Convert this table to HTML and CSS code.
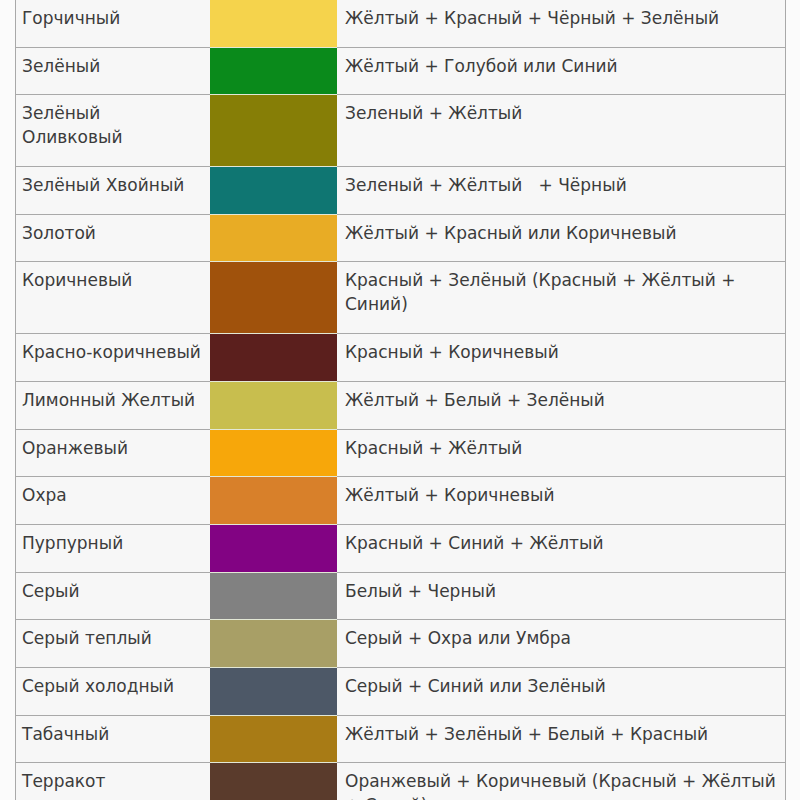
FILE: index.html
```html
<!DOCTYPE html>
<html lang="ru">
<head>
<meta charset="utf-8">
<title>Смешивание цветов</title>
<link rel="stylesheet" href="styles.css">
</head>
<body>
<div class="table">
  <div class="name">Горчичный</div><div class="sw c1"></div><div class="desc">Жёлтый + Красный + Чёрный + Зелёный</div>
  <div class="name">Зелёный</div><div class="sw c2"></div><div class="desc">Жёлтый + Голубой или Синий</div>
  <div class="name">Зелёный<br>Оливковый</div><div class="sw c3"></div><div class="desc">Зеленый + Жёлтый</div>
  <div class="name">Зелёный Хвойный</div><div class="sw c4"></div><div class="desc">Зеленый + Жёлтый&nbsp;&nbsp; + Чёрный</div>
  <div class="name">Золотой</div><div class="sw c5"></div><div class="desc">Жёлтый + Красный или Коричневый</div>
  <div class="name">Коричневый</div><div class="sw c6"></div><div class="desc">Красный + Зелёный (Красный + Жёлтый +<br>Синий)</div>
  <div class="name">Красно-коричневый</div><div class="sw c7"></div><div class="desc">Красный + Коричневый</div>
  <div class="name">Лимонный Желтый</div><div class="sw c8"></div><div class="desc">Жёлтый + Белый + Зелёный</div>
  <div class="name">Оранжевый</div><div class="sw c9"></div><div class="desc">Красный + Жёлтый</div>
  <div class="name">Охра</div><div class="sw c10"></div><div class="desc">Жёлтый + Коричневый</div>
  <div class="name">Пурпурный</div><div class="sw c11"></div><div class="desc">Красный + Синий + Жёлтый</div>
  <div class="name">Серый</div><div class="sw c12"></div><div class="desc">Белый + Черный</div>
  <div class="name">Серый теплый</div><div class="sw c13"></div><div class="desc">Серый + Охра или Умбра</div>
  <div class="name">Серый холодный</div><div class="sw c14"></div><div class="desc">Серый + Синий или Зелёный</div>
  <div class="name">Табачный</div><div class="sw c15"></div><div class="desc">Жёлтый + Зелёный + Белый + Красный</div>
  <div class="name">Терракот</div><div class="sw c16"></div><div class="desc">Оранжевый + Коричневый (Красный + Жёлтый<br>+ Синий)</div>
</div>
</body>
</html>
```

FILE: styles.css
```css
html, body {
  margin: 0;
  padding: 0;
  background: #fbfbfb;
}

.table {
  margin-left: 15px;
  width: 769px;
  display: grid;
  grid-template-columns: 194px 127px 448px;
  border-left: 1px solid #a9a9a9;
  border-right: 1px solid #a9a9a9;
  font-family: "DejaVu Sans", sans-serif;
  font-size: 17px;
  line-height: 24px;
  color: #3c3c3c;
}

.name, .desc {
  background: #f7f7f7;
  border-bottom: 1px solid #a9a9a9;
  padding: 6px 6px 16.7px 6px;
  white-space: nowrap;
}

.desc {
  padding-left: 8px;
}

.sw {
  border-bottom: 1px solid #e3e8d6;
}

.c1 { background: #f5d34c; }
.c2 { background: #0a8a1b; }
.c3 { background: #867e06; }
.c4 { background: #0f7672; }
.c5 { background: #e8ac25; }
.c6 { background: #a0520c; }
.c7 { background: #5b1f1d; }
.c8 { background: #c8be4e; }
.c9 { background: #f7a70a; }
.c10 { background: #d8802a; }
.c11 { background: #820383; }
.c12 { background: #818181; }
.c13 { background: #a89f66; }
.c14 { background: #4d5867; }
.c15 { background: #a87b15; }
.c16 { background: #5a3b2c; }
```
